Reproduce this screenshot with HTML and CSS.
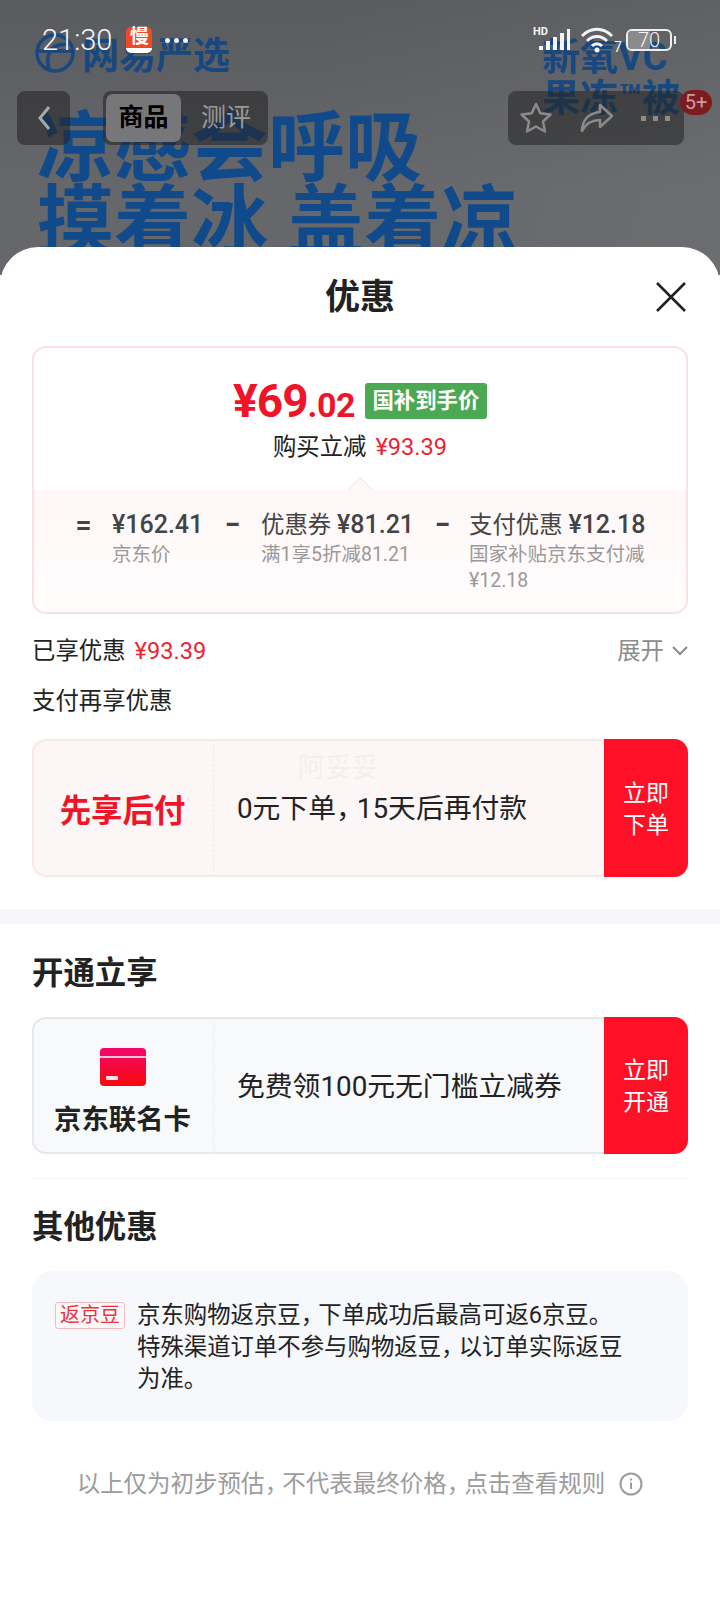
FILE: index.html
```html
<!DOCTYPE html>
<html lang="zh-CN">
  <head>
    <meta charset="UTF-8" />
    <title>优惠</title>
    <link rel="stylesheet" href="styles.css">
  </head>
  <body>
    <!-- product picture behind the sheet -->
    <div class="hero">
      <div class="hero-top">
        <div class="brand">
          <svg class="brand-logo" width="40" height="42" viewBox="0 0 40 42" fill="none" stroke="#17487f" stroke-width="3.5">
            <circle cx="20" cy="21" r="18" />
            <path d="M3 19h34M15 19c-3 6-3 13 0 20M15 19c5-6 13-8 19-6" />
          </svg>
          <span>网易严选</span>
        </div>
        <div class="promo">新氧VC<br />果冻™被</div>
      </div>
      <div class="headline">凉感会呼吸<br />摸着冰 盖着凉</div>
    </div>

    <!-- status bar -->
    <div class="status">
      <span class="clock">21:30</span>
      <span class="app-icon"><span>慢</span></span>
      <span class="status-dots"><i></i><i></i><i></i></span>
      <span class="status-right">
        <span class="hd">HD</span>
        <svg width="32" height="22" viewBox="0 0 32 22" fill="#f4f4f4">
          <rect x="0" y="17" width="4" height="4" />
          <rect x="7" y="12" width="4" height="9" />
          <rect x="14" y="8" width="4" height="13" />
          <rect x="21" y="4" width="4" height="17" />
          <rect x="28" y="0" width="3" height="21" />
        </svg>
        <svg class="wifi" width="34" height="26" viewBox="0 0 34 26" fill="none" stroke="#f4f4f4" stroke-width="3">
          <path d="M2 9c9-9 21-9 30 0M7 14c6-6 14-6 20 0M12 19c3-3 7-3 10 0" />
          <circle cx="17" cy="23" r="2.5" fill="#f4f4f4" stroke="none" />
        </svg>
        <span class="wifi-num">7</span>
        <span class="battery"><span class="battery-fill"></span><span class="battery-num">70</span></span>
        <span class="battery-nub"></span>
      </span>
    </div>

    <!-- nav buttons over the picture -->
    <div class="nav">
      <div class="nav-box nav-back">
        <svg width="14" height="26" viewBox="0 0 14 26" fill="none" stroke="#a8a8a8" stroke-width="3">
          <path d="M12 2 3 13l9 11" />
        </svg>
      </div>
      <div class="nav-box nav-tabs">
        <span class="tab active">商品</span>
        <span class="tab">测评</span>
      </div>
      <div class="nav-box nav-actions">
        <svg width="34" height="34" viewBox="0 0 34 34" fill="none" stroke="#8a8a8a" stroke-width="2.5" stroke-linejoin="round">
          <path d="M17 3l4.3 9.3 10.2 1.2-7.5 7 2 10L17 25.5 8 30.5l2-10-7.5-7 10.2-1.2z" />
        </svg>
        <svg width="34" height="30" viewBox="0 0 34 30" fill="none" stroke="#8a8a8a" stroke-width="2.5" stroke-linejoin="round">
          <path d="M20 2l12 11-12 11v-7C12 17 6 20 2 28c0-11 7-18 18-19z" />
        </svg>
        <span class="nav-more"><i></i><i></i><i></i></span>
        <span class="nav-badge">5+</span>
      </div>
    </div>

    <div class="sheet">
      <div class="sheet-head">
        <h1>优惠</h1>
        <svg class="close" width="32" height="32" viewBox="0 0 32 32" stroke="#222" stroke-width="2.6">
          <path d="M2 2l28 28M30 2 2 30" />
        </svg>
      </div>

      <div class="section">
        <div class="price-card">
          <div class="price-top">
            <div class="price-row">
              <span class="price-big"><b>¥69</b><em>.02</em></span>
              <span class="price-tag">国补到手价</span>
            </div>
            <div class="price-sub">购买立减<span class="red">¥93.39</span></div>
          </div>
          <div class="price-band">
            <span class="sign">=</span>
            <div class="term term-a">
              <div class="term-main"><span class="num">¥162.41</span></div>
              <div class="term-note">京东价</div>
            </div>
            <span class="sign">−</span>
            <div class="term term-b">
              <div class="term-main">优惠券 <span class="num">¥81.21</span></div>
              <div class="term-note">满1享5折减81.21</div>
            </div>
            <span class="sign">−</span>
            <div class="term term-c">
              <div class="term-main">支付优惠 <span class="num">¥12.18</span></div>
              <div class="term-note">国家补贴京东支付减¥12.18</div>
            </div>
          </div>
        </div>

        <div class="got-row">
          <span>已享优惠<span class="red">¥93.39</span></span>
          <span class="expand">展开
            <svg width="16" height="10" viewBox="0 0 16 10" fill="none" stroke="#8c8c8c" stroke-width="2"><path d="M1 1l7 7 7-7" /></svg>
          </span>
        </div>
        <div class="pay-title">支付再享优惠</div>

        <div class="offer offer-pink">
          <div class="offer-left"><span class="offer-name">先享后付</span></div>
          <div class="offer-text">0元下单<span class="comma">，</span>15天后再付款</div>
          <div class="offer-btn">立即<br />下单</div>
          <span class="watermark">阿妥妥</span>
        </div>
      </div>

      <div class="gap-band"></div>

      <div class="section section-open">
        <h2>开通立享</h2>
        <div class="offer offer-grey">
          <div class="offer-left offer-left-col">
            <svg width="46" height="38" viewBox="0 0 46 38">
              <defs>
                <linearGradient id="cardRed" x1="0" y1="0" x2="0" y2="1">
                  <stop offset="0" stop-color="#f2066e" />
                  <stop offset="1" stop-color="#f70a0a" />
                </linearGradient>
              </defs>
              <rect width="46" height="38" rx="4" fill="url(#cardRed)" />
              <rect y="8" width="46" height="2" fill="#ffc4d8" />
              <rect x="6" y="28" width="12" height="4" rx="1" fill="#ffe3e3" />
            </svg>
            <span class="card-name">京东联名卡</span>
          </div>
          <div class="offer-text">免费领100元无门槛立减券</div>
          <div class="offer-btn">立即<br />开通</div>
        </div>
        <div class="divider"></div>
        <h2 class="other-title">其他优惠</h2>
        <div class="other-box">
          <span class="other-tag">返京豆</span>
          <p>京东购物返京豆<span class="comma">，</span>下单成功后最高可返6京豆。特殊渠道订单不参与购物返豆<span class="comma">，</span>以订单实际返豆为准。</p>
        </div>
        <div class="foot-note">
          <span>以上仅为初步预估<span class="comma">，</span>不代表最终价格<span class="comma">，</span>点击查看规则</span>
          <svg width="24" height="24" viewBox="0 0 24 24" fill="none" stroke="#9c9c9c" stroke-width="2">
            <circle cx="12" cy="12" r="10.5" />
            <path d="M12 10.5v6.5M12 6.5v2" />
          </svg>
        </div>
      </div>
    </div>
  </body>
</html>
```

FILE: styles.css
```css
* {
  box-sizing: border-box;
}
html,
body {
  margin: 0;
  background: #fff;
}
body {
  position: relative;
  width: 720px;
  height: 1600px;
  overflow: hidden;
  font-family: Roboto, "Noto Sans CJK SC", sans-serif;
  color: #222;
}
h1,
h2,
p {
  margin: 0;
}
.red {
  margin-left: 9px;
  font-size: 23.6px;
  color: #ee2233;
}
/* the commas in this UI are narrower than a full em */
.comma {
  font-feature-settings: "halt" 1;
  margin-right: 0.25em;
}

/* picture */
.hero {
  height: 275px;
  padding: 32px 40px 0 35px;
  overflow: hidden;
  background: linear-gradient(100deg, rgba(0, 0, 0, 0) 40%, rgba(255, 255, 255, 0.04) 100%),
    linear-gradient(180deg, #5a5b5f 0%, #66676a 70%);
  color: #104a8b;
}
.hero-top {
  display: flex;
  justify-content: space-between;
}
.brand {
  display: flex;
  align-items: center;
  gap: 7px;
  height: 42px;
  font-size: 37px;
  font-weight: 700;
  color: #17487f;
}
.promo {
  margin-top: 5px;
  font-size: 38px;
  line-height: 41px;
  font-weight: 700;
  color: #17487f;
}
.headline {
  margin: -7px 0 0 2px;
  font-size: 77px;
  line-height: 74px;
  font-weight: 700;
  white-space: nowrap;
}

/* status bar */
.status {
  position: absolute;
  top: 27px;
  left: 42px;
  right: 44px;
  display: flex;
  align-items: center;
  height: 26px;
  color: #f6f6f6;
}
.clock {
  font-size: 29px;
  font-weight: 300;
}
.app-icon {
  display: flex;
  justify-content: center;
  width: 26px;
  height: 26px;
  margin-left: 14px;
  border-radius: 5px;
  border-bottom: 5px solid #fff;
  background: #ee4a26;
  color: #fff;
  font-size: 19px;
  line-height: 20px;
  font-weight: 700;
}
.status-dots {
  display: flex;
  gap: 4px;
  margin-left: 13px;
}
.status-dots i {
  width: 5px;
  height: 5px;
  border-radius: 50%;
  background: #f0f0f0;
}
.status-right {
  position: relative;
  display: flex;
  align-items: center;
  margin-left: auto;
}
.hd {
  position: absolute;
  left: -6px;
  top: -1px;
  font-size: 11px;
  line-height: 12px;
  font-weight: 700;
}
.wifi {
  margin-left: 9px;
}
.wifi-num {
  width: 12px;
  margin-top: 14px;
  font-size: 14px;
  line-height: 12px;
}
.battery {
  position: relative;
  width: 46px;
  height: 22px;
  border: 2px solid #eee;
  border-radius: 6px;
  overflow: hidden;
}
.battery-fill {
  display: block;
  width: 22px;
  height: 100%;
  background: #8a8a8a;
}
.battery-num {
  position: absolute;
  inset: 0;
  text-align: center;
  font-size: 20px;
  line-height: 18px;
  font-weight: 300;
}
.battery-nub {
  width: 2px;
  height: 8px;
  margin-left: 2px;
  background: #eee;
}

/* nav */
.nav {
  position: absolute;
  top: 91px;
  left: 17px;
  right: 36px;
  display: flex;
}
.nav-box {
  display: flex;
  align-items: center;
  height: 54px;
  border-radius: 8px;
  background: rgba(35, 35, 35, 0.55);
}
.nav-back {
  justify-content: center;
  width: 53px;
}
.nav-tabs {
  width: 165px;
  margin-left: 33px;
  padding: 0 3px;
}
.tab {
  width: 75px;
  text-align: center;
  font-size: 25px;
  line-height: 48px;
  color: #9a9a9a;
}
.tab.active {
  border-radius: 7px;
  background: #77777a;
  color: #000;
  font-weight: 700;
}
.tab + .tab {
  margin-left: 14px;
  width: 62px;
}
.nav-actions {
  position: relative;
  justify-content: space-between;
  width: 176px;
  margin-left: auto;
  padding: 0 14px 0 11px;
}
.nav-more {
  display: flex;
  gap: 7px;
}
.nav-more i {
  width: 5px;
  height: 5px;
  background: #8c8c8c;
}
.nav-badge {
  position: absolute;
  top: -1px;
  right: -28px;
  width: 32px;
  height: 25px;
  border-radius: 13px;
  background: #7c1c20;
  color: #cf9a9a;
  text-align: center;
  font-size: 20px;
  line-height: 25px;
}

/* sheet */
.sheet {
  position: relative;
  margin-top: -28px;
  border-radius: 38px 38px 0 0;
  background: #fff;
}
.sheet-head {
  position: relative;
  height: 99px;
  padding-top: 26px;
  text-align: center;
}
.sheet-head h1 {
  font-size: 35px;
  line-height: 50px;
  font-weight: 700;
}
.close {
  position: absolute;
  top: 34px;
  right: 33px;
}
.section {
  padding: 0 32px 32px;
}

/* price card */
.price-card {
  height: 268px;
  border: 2px solid #fadfe4;
  border-radius: 14px;
  overflow: hidden;
}
.price-top {
  position: relative;
  height: 142px;
  text-align: center;
}
.price-top::after {
  content: "";
  position: absolute;
  left: 50%;
  bottom: -1px;
  width: 18px;
  height: 18px;
  margin-left: -9px;
  transform: translateY(9px) rotate(45deg);
  background: #fff7f8;
  border-top: 1px solid #fbe3e6;
  border-left: 1px solid #fbe3e6;
}
.price-row {
  display: flex;
  justify-content: center;
  align-items: center;
  gap: 10px;
  padding-top: 35px;
  height: 71px;
}
.price-big {
  color: #f01428;
  white-space: nowrap;
}
.price-big b {
  font-size: 46px;
  line-height: 46px;
  font-weight: 700;
  letter-spacing: -1px;
}
.price-big em {
  font-style: normal;
  font-size: 34px;
  font-weight: 700;
  letter-spacing: -0.5px;
}
.price-tag {
  width: 122px;
  height: 36px;
  border-radius: 3px;
  background: #4ca852;
  color: #fff;
  text-align: center;
  font-size: 21.4px;
  line-height: 35px;
  font-weight: 700;
}
.price-sub {
  margin-top: 13px;
  font-size: 23.4px;
  line-height: 30px;
}
.price-band {
  position: relative;
  display: flex;
  height: 124px;
  padding: 20px 0 0 41px;
  background: linear-gradient(#fff7f8, #fffdfd);
  color: #444;
}
.sign {
  width: 17px;
  margin: 0 20px;
  font-size: 28px;
  line-height: 30px;
  font-weight: 700;
  text-align: center;
}
.sign:first-child {
  margin-left: 0;
}
.term-main {
  font-size: 23.4px;
  line-height: 30px;
  white-space: nowrap;
}
.num {
  font-size: 25px;
  font-weight: 500;
}
.term-note {
  margin-top: 2px;
  font-size: 19.5px;
  line-height: 26px;
  color: #999;
}
.term-a {
  width: 92px;
}
.term-b {
  width: 151px;
}
.term-b .term-note {
  white-space: nowrap;
}
.term-b + .sign {
  margin-left: 22px;
  margin-right: 18px;
}
.term-c {
  width: 180px;
}

/* rows under the card */
.got-row {
  display: flex;
  justify-content: space-between;
  margin-top: 22px;
  font-size: 23.4px;
  line-height: 30px;
}
.expand {
  display: flex;
  align-items: center;
  gap: 8px;
  color: #8c8c8c;
}
.pay-title {
  margin-top: 20px;
  font-size: 23.4px;
  line-height: 30px;
}

/* offer cards */
.offer {
  position: relative;
  display: flex;
  align-items: center;
  height: 138px;
  margin-top: 23px;
  border-radius: 14px;
  overflow: hidden;
}
.offer-pink {
  box-shadow: inset 0 0 0 2px #fae8e8;
  background: #fdf6f6;
}
.offer-grey {
  height: 137px;
  box-shadow: inset 0 0 0 2px #e8e8ea;
  background: #f8f9fb;
}
.offer-left {
  display: flex;
  justify-content: center;
  align-items: center;
  flex: none;
  width: 182px;
  height: 100%;
  border-right: 1px dashed #f6e6e6;
}
.offer-grey .offer-left {
  border-right-color: #eeeef0;
}
.offer-left-col {
  flex-direction: column;
  gap: 16px;
  padding-top: 14px;
}
.offer-name {
  font-size: 31.4px;
  font-weight: 700;
  color: #f01428;
}
.card-name {
  font-size: 27.4px;
  line-height: 36px;
  font-weight: 700;
}
.offer-text {
  flex: 1;
  padding: 0 0 4px 23px;
  font-size: 27.8px;
  white-space: nowrap;
}
.offer-btn {
  flex: none;
  align-self: stretch;
  display: flex;
  align-items: center;
  justify-content: center;
  width: 84px;
  padding-top: 3px;
  background: #fe1027;
  color: #fff;
  text-align: center;
  font-size: 23px;
  line-height: 32px;
}
.watermark {
  position: absolute;
  left: 266px;
  top: 11px;
  font-size: 27px;
  line-height: 36px;
  color: #f3eeee;
  text-shadow: 0 0 1px #fff;
}

.gap-band {
  height: 15px;
  background: #f6f7fb;
}
.section-open {
  padding-top: 30px;
}
.section-open h2 {
  font-size: 31.4px;
  line-height: 40px;
  font-weight: 700;
}
.divider {
  height: 1px;
  margin-top: 24px;
  background: #f3f3f3;
}
.section-open .other-title {
  margin-top: 29px;
}
.other-box {
  display: flex;
  align-items: flex-start;
  height: 150px;
  margin-top: 23px;
  padding: 28px 60px 0 23px;
  border-radius: 20px;
  background: #f6f8fb;
}
.other-tag {
  flex: none;
  width: 70px;
  height: 27px;
  margin: 3px 12px 0 0;
  border: 1px solid #f5b9be;
  border-radius: 3px;
  background: #fff8f8;
  color: #e5343f;
  text-align: center;
  font-size: 20px;
  line-height: 25px;
}
.other-box p {
  font-size: 23.4px;
  line-height: 32px;
}
.foot-note {
  display: flex;
  justify-content: center;
  align-items: center;
  gap: 14px;
  margin-top: 47px;
  font-size: 23.5px;
  line-height: 32px;
  color: #9c9c9c;
}
```
